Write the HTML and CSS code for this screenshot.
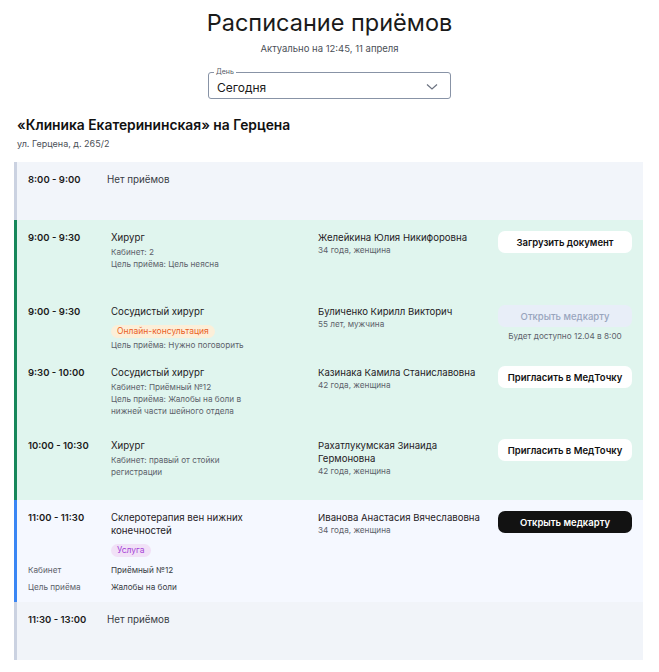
FILE: index.html
```html
<!DOCTYPE html>
<html lang="ru">
<head>
<meta charset="utf-8">
<title>Расписание приёмов</title>
<link rel="stylesheet" href="styles.css">
</head>
<body>
<header class="head">
  <h1 class="title">Расписание приёмов</h1>
  <p class="updated">Актуально на 12:45, 11 апреля</p>
  <div class="select">
    <span class="select-label">День</span>
    <span class="select-value">Сегодня</span>
    <svg class="chev" width="12" height="8" viewBox="0 0 12 8"><polyline points="1,1.5 6,6 11,1.5" fill="none" stroke="#6b7280" stroke-width="1.2"/></svg>
  </div>
</header>

<section class="clinic">
  <h2 class="clinic-name">«Клиника Екатерининская» на Герцена</h2>
  <p class="clinic-addr">ул. Герцена, д. 265/2</p>
</section>

<div class="schedule">
  <div class="empty">
    <div class="time">8:00 - 9:00</div>
    <div class="empty-text">Нет приёмов</div>
  </div>

  <div class="slot green h74">
    <div class="time">9:00 - 9:30</div>
    <div class="svc">
      <div class="svc-name">Хирург</div>
      <div class="sub first">Кабинет: 2</div>
      <div class="sub">Цель приёма: Цель неясна</div>
    </div>
    <div class="pat">
      <div class="pat-name">Желейкина Юлия Никифоровна</div>
      <div class="pat-age">34 года, женщина</div>
    </div>
    <div class="act"><button class="btn">Загрузить документ</button></div>
  </div>

  <div class="slot green h61">
    <div class="time">9:00 - 9:30</div>
    <div class="svc">
      <div class="svc-name">Сосудистый хирург</div>
      <span class="tag tag-online">Онлайн-консультация</span>
      <div class="sub">Цель приёма: Нужно поговорить</div>
    </div>
    <div class="pat">
      <div class="pat-name">Буличенко Кирилл Викторич</div>
      <div class="pat-age">55 лет, мужчина</div>
    </div>
    <div class="act">
      <button class="btn btn-disabled">Открыть медкарту</button>
      <div class="note">Будет доступно 12.04 в 8:00</div>
    </div>
  </div>

  <div class="slot green h73">
    <div class="time">9:30 - 10:00</div>
    <div class="svc">
      <div class="svc-name">Сосудистый хирург</div>
      <div class="sub first">Кабинет: Приёмный №12</div>
      <div class="sub">Цель приёма: Жалобы на боли в нижней части шейного отдела</div>
    </div>
    <div class="pat">
      <div class="pat-name">Казинака Камила Станиславовна</div>
      <div class="pat-age">42 года, женщина</div>
    </div>
    <div class="act"><button class="btn">Пригласить в МедТочку</button></div>
  </div>

  <div class="slot green h72">
    <div class="time">10:00 - 10:30</div>
    <div class="svc">
      <div class="svc-name">Хирург</div>
      <div class="sub first">Кабинет: правый от стойки регистрации</div>
    </div>
    <div class="pat">
      <div class="pat-name">Рахатлукумская Зинаида Гермоновна</div>
      <div class="pat-age">42 года, женщина</div>
    </div>
    <div class="act"><button class="btn">Пригласить в МедТочку</button></div>
  </div>

  <div class="slot blue h102">
    <div class="time">11:00 - 11:30</div>
    <div class="svc">
      <div class="svc-name">Склеротерапия вен нижних конечностей</div>
      <span class="tag tag-service">Услуга</span>
    </div>
    <div class="pat">
      <div class="pat-name">Иванова Анастасия Вячеславовна</div>
      <div class="pat-age">34 года, женщина</div>
    </div>
    <div class="act"><button class="btn btn-dark">Открыть медкарту</button></div>
    <div class="dl">
      <div class="dt">Кабинет</div><div class="dd">Приёмный №12</div>
      <div class="dt">Цель приёма</div><div class="dd">Жалобы на боли</div>
    </div>
  </div>

  <div class="empty last">
    <div class="time">11:30 - 13:00</div>
    <div class="empty-text">Нет приёмов</div>
  </div>
</div>
</body>
</html>
```

FILE: styles.css
```css
* { box-sizing: border-box; }
body {
  margin: 0;
  background: #fff;
  font-family: Inter, "Noto Sans", sans-serif;
  color: #1f2125;
  width: 659px;
}
.head {
  display: flex;
  flex-direction: column;
  align-items: center;
  padding-top: 8px;
}
.title {
  margin: 0;
  font-size: 23.5px;
  font-weight: 400;
  line-height: 30px;
  color: #1a1a1a;
}
.updated {
  margin: 4px 0 0;
  font-size: 9.5px;
  line-height: 14px;
  color: #4b4f57;
}
.select {
  position: relative;
  margin-top: 16px;
  width: 243px;
  height: 27px;
  border: 1px solid #8893a6;
  border-radius: 3px;
  display: flex;
  align-items: center;
  padding: 3px 8px 0 8px;
}
.select-label {
  position: absolute;
  top: -6px;
  left: 5px;
  padding: 0 2px;
  background: #fff;
  font-size: 7px;
  line-height: 10px;
  color: #555b66;
}
.select-value {
  flex: 1;
  font-size: 12px;
  color: #1a1a1a;
}
.chev { margin-right: 4px; }

.clinic { padding: 17px 0 0 17px; }
.clinic-name {
  margin: 0;
  font-size: 13.8px;
  font-weight: 600;
  line-height: 18px;
  color: #111;
}
.clinic-addr {
  margin: 4px 0 0;
  font-size: 9px;
  line-height: 12px;
  color: #4b4f57;
}

.schedule {
  margin: 12px 16px 0 14px;
  display: flex;
  flex-direction: column;
}
.empty {
  height: 58px;
  background: #f2f5fa;
  border-left: 3px solid #cbd2e1;
  padding: 11px 0 0 11px;
  display: flex;
}
.empty.last { background: #f1f4f9; }
.empty .time { width: 79px; }
.empty-text {
  font-size: 9.8px;
  line-height: 14px;
  color: #383c44;
}
.time {
  font-size: 9.5px;
  font-weight: 600;
  line-height: 14px;
  color: #1a1a1a;
}
.slot {
  display: grid;
  grid-template-columns: 83px 207px 180px 134px;
  align-content: start;
  padding: 11px 0 0 11px;
  border-left: 3px solid;
}
.green { background: #e0f5ee; border-left-color: #16875a; }
.blue { background: #f5f8ff; border-left-color: #3a86f4; }
.h74 { height: 74px; }
.h61 { height: 61px; }
.h73 { height: 73px; }
.h72 { height: 72px; }
.h102 { height: 102px; }

.svc-name {
  font-size: 9.7px;
  line-height: 13px;
  color: #1f2125;
  max-width: 140px;
}
.sub {
  font-size: 8.2px;
  line-height: 12px;
  color: #5d626b;
  max-width: 142px;
}
.sub.first { margin-top: 2px; }
.tag {
  display: inline-block;
  margin: 2px 0 1px;
  padding: 0 6px;
  height: 13px;
  line-height: 13px;
  font-size: 8.5px;
  border-radius: 7px;
}
.tag-online { background: #fcefd9; color: #ea5f1f; }
.tag-service { background: #f1e1f7; color: #a53fd6; margin-top: 3px; }
.pat-name {
  font-size: 9.6px;
  line-height: 13px;
  color: #1f2125;
  max-width: 170px;
}
.pat-age {
  font-size: 8.2px;
  line-height: 12px;
  color: #5d626b;
}
.act {
  display: flex;
  flex-direction: column;
  align-items: stretch;
}
.btn {
  height: 22px;
  border: none;
  border-radius: 7px;
  background: #fff;
  color: #111;
  font-family: inherit;
  font-size: 9.5px;
  font-weight: 600;
  padding: 0;
}
.btn-disabled { background: #e8eef8; color: #98a5bd; font-weight: 500; }
.btn-dark { background: #121212; color: #fff; }
.note {
  margin-top: 3px;
  text-align: center;
  font-size: 8.2px;
  line-height: 12px;
  color: #5d626b;
}
.dl {
  grid-column: 1 / 3;
  display: grid;
  grid-template-columns: 83px 1fr;
  row-gap: 5px;
  margin-top: 6px;
  font-size: 8.2px;
  line-height: 12px;
}
.dt { color: #5d626b; }
.dd { color: #383c44; }
```
